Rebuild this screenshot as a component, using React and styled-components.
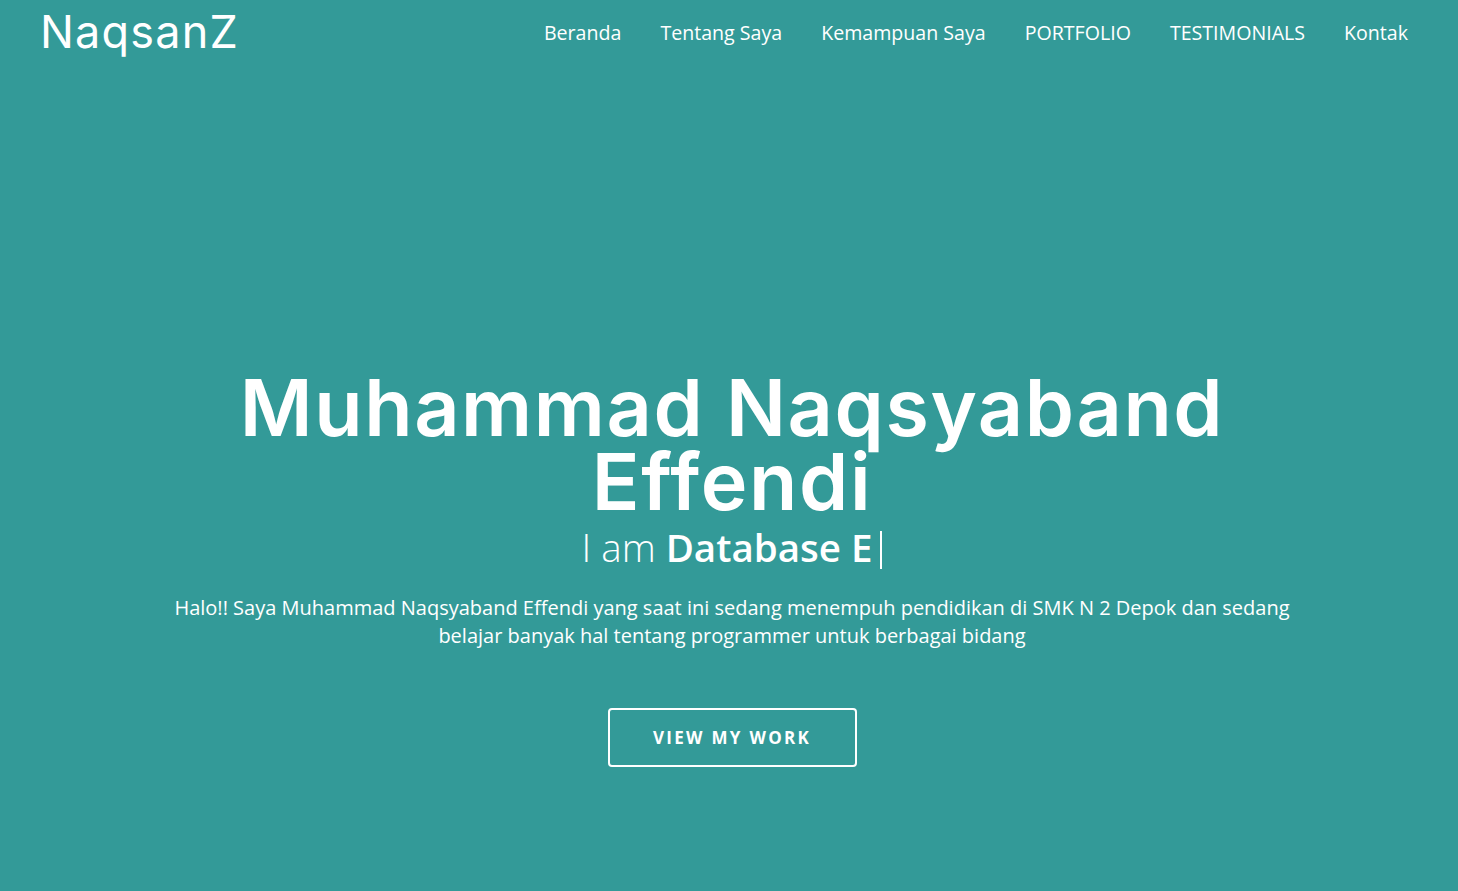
import styled, { createGlobalStyle } from "styled-components";

const GlobalStyle = createGlobalStyle`
   html, body {
      margin: 0;
      padding: 0;
      background: #339a98;
   }
   * {
      box-sizing: border-box;
   }
`;

const navLinks = ["Beranda", "Tentang Saya", "Kemampuan Saya", "PORTFOLIO", "TESTIMONIALS", "Kontak"];

export default function App() {
   return (
      <Page>
         <GlobalStyle />
         <Nav>
            <Logo>NaqsanZ</Logo>
            <Menu>
               {navLinks.map((el, index) => (
                  <MenuItem key={index} href="#">
                     {el}
                  </MenuItem>
               ))}
            </Menu>
         </Nav>
         <Hero>
            <Title>
               Muhammad Naqsyaband
               <br />
               Effendi
            </Title>
            <Typed>
               <span className="light">I am </span>
               <b>Database E</b>
               <Cursor />
            </Typed>
            <Intro>
               Halo!! Saya Muhammad Naqsyaband Effendi yang saat ini sedang menempuh pendidikan di SMK N 2
               Depok dan sedang belajar banyak hal tentang programmer untuk berbagai bidang
            </Intro>
            <Button href="#">VIEW MY WORK</Button>
         </Hero>
      </Page>
   );
}

const Page = styled.div`
   width: 100%;
   min-height: 891px;
   background: #339a98;
   color: #fff;
   font-family: "Open Sans", "Liberation Sans", sans-serif;
`;

const Nav = styled.nav`
   height: 64px;
   display: flex;
   align-items: center;
   justify-content: space-between;
   padding: 0 50px 0 40px;
`;

const Logo = styled.div`
   font-family: Inter, "Noto Sans", sans-serif;
   font-size: 45px;
   font-weight: 400;
   letter-spacing: 1.2px;
   line-height: 1;
   margin-top: -2px;
`;

const Menu = styled.div`
   display: flex;
   gap: 39px;
`;

const MenuItem = styled.a`
   color: #fff;
   text-decoration: none;
   font-size: 19.6px;
   font-weight: 400;
`;

const Hero = styled.section`
   display: flex;
   flex-direction: column;
   align-items: center;
   text-align: center;
   padding: 306px 0 0 6px;
`;

const Title = styled.h1`
   margin: 0;
   font-family: Inter, "Noto Sans", sans-serif;
   font-size: 79px;
   font-weight: 600;
   line-height: 74px;
   letter-spacing: 1.6px;
`;

const Typed = styled.div`
   margin-top: 4px;
   font-size: 38.5px;
   line-height: 50px;
   display: flex;
   align-items: center;

   .light {
      font-weight: 300;
      white-space: pre;
   }
   b {
      font-weight: 600;
   }
`;

const Cursor = styled.span`
   display: inline-block;
   width: 2px;
   height: 38px;
   margin-left: 8px;
   margin-top: 6px;
   background: #fff;
`;

const Intro = styled.p`
   margin: 22px 0 0;
   max-width: 1140px;
   font-size: 20px;
   line-height: 28px;
`;

const Button = styled.a`
   margin-top: 58px;
   width: 249px;
   height: 59px;
   display: flex;
   align-items: center;
   justify-content: center;
   border: 2px solid #fff;
   border-radius: 4px;
   color: #fff;
   text-decoration: none;
   font-size: 17px;
   font-weight: 700;
   letter-spacing: 2.3px;
`;
